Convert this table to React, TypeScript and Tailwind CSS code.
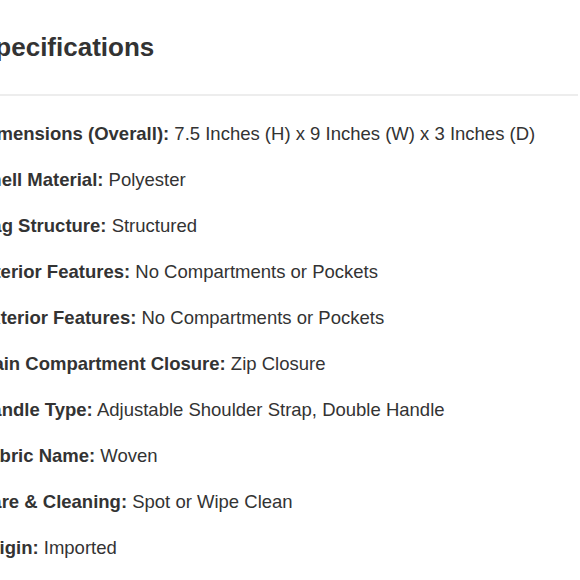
import React from 'react';

interface Spec {
  label: string;
  value: string;
}

const specs: Spec[] = [
  { label: 'Dimensions (Overall):', value: '7.5 Inches (H) x 9 Inches (W) x 3 Inches (D)' },
  { label: 'Shell Material:', value: 'Polyester' },
  { label: 'Bag Structure:', value: 'Structured' },
  { label: 'Interior Features:', value: 'No Compartments or Pockets' },
  { label: 'Exterior Features:', value: 'No Compartments or Pockets' },
  { label: 'Main Compartment Closure:', value: 'Zip Closure' },
  { label: 'Handle Type:', value: 'Adjustable Shoulder Strap, Double Handle' },
  { label: 'Fabric Name:', value: 'Woven' },
  { label: 'Care & Cleaning:', value: 'Spot or Wipe Clean' },
  { label: 'Origin:', value: 'Imported' },
];

const App: React.FC = () => {
  return (
    <div className="h-[580px] w-[580px] overflow-hidden bg-white font-['Liberation_Sans',Arial,sans-serif] text-[#333]">
      <div className="-ml-[22px] mr-[2px]">
        <div className="flex h-[96px] items-center border-b-2 border-[#ededed] pt-[1px]">
          <h2 className="text-[26px] font-bold text-[#333]">Specifications</h2>
        </div>
        <ul className="pt-[15px]">
          {specs.map((spec) => (
            <li key={spec.label} className="whitespace-nowrap text-[18.5px] leading-[46px]">
              <span className="font-bold">{spec.label}</span> {spec.value}
            </li>
          ))}
        </ul>
      </div>
    </div>
  );
};

export default App;
